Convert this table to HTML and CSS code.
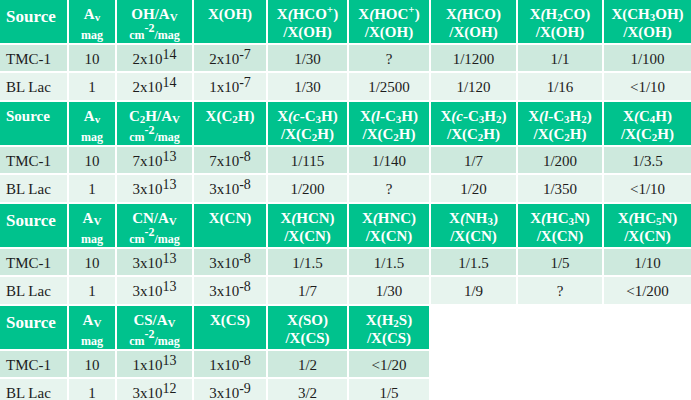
FILE: index.html
```html
<!DOCTYPE html>
<html lang="en">
  <head>
    <meta charset="UTF-8" />
    <title>Molekyler</title>
    <link rel="stylesheet" href="styles.css">
  </head>
  <body>
    <table class="tabel">
      <colgroup>
        <col class="c1" /><col class="c2" /><col class="c3" /><col class="c4" /><col class="c5" />
        <col class="c6" /><col class="c7" /><col class="c8" /><col class="c9" />
      </colgroup>
      <tr class="hoved">
        <th class="kilde">Source</th>
        <th>A<sub>v</sub><br /><span class="lille">mag</span></th>
        <th>OH/A<sub>V</sub><br /><span class="lille">cm<sup>-2</sup>/mag</span></th>
        <th>X(OH)</th>
        <th>X<i>(</i>HCO<sup>+</sup>)<br />/X(OH)</th>
        <th>X<i>(</i>HOC<sup>+</sup>)<br />/X(OH)</th>
        <th>X<i>(</i>HCO)<br />/X(OH)</th>
        <th>X<i>(</i>H<sub>2</sub>CO)<br />/X(OH)</th>
        <th>X(CH<sub>3</sub>OH)<br />/X(OH)</th>
      </tr>
      <tr class="lys">
        <td class="kilde">TMC-1</td><td>10</td><td>2x10<sup>14</sup></td><td>2x10<sup>-7</sup></td>
        <td>1/30</td><td>?</td><td>1/1200</td><td>1/1</td><td>1/100</td>
      </tr>
      <tr class="lysere">
        <td class="kilde">BL Lac</td><td>1</td><td>2x10<sup>14</sup></td><td>1x10<sup>-7</sup></td>
        <td>1/30</td><td>1/2500</td><td>1/120</td><td>1/16</td><td>&lt;1/10</td>
      </tr>
    </table>

    <table class="tabel">
      <colgroup>
        <col class="c1" /><col class="c2" /><col class="c3" /><col class="c4" /><col class="c5" />
        <col class="c6" /><col class="c7" /><col class="c8" /><col class="c9" />
      </colgroup>
      <tr class="hoved">
        <th class="kilde mindre">Source</th>
        <th>A<sub>v</sub><br /><span class="lille">mag</span></th>
        <th>C<sub>2</sub>H/A<sub>V</sub><br /><span class="lille">cm<sup>-2</sup>/mag</span></th>
        <th>X(C<sub>2</sub>H)</th>
        <th>X<i>(c</i>-C<sub>3</sub>H)<br />/X(C<sub>2</sub>H)</th>
        <th>X<i>(l</i>-C<sub>3</sub>H)<br />/X(C<sub>2</sub>H)</th>
        <th>X<i>(c</i>-C<sub>3</sub>H<sub>2</sub>)<br />/X(C<sub>2</sub>H)</th>
        <th>X<i>(l</i>-C<sub>3</sub>H<sub>2</sub>)<br />/X(C<sub>2</sub>H)</th>
        <th>X<i>(</i>C<sub>4</sub>H)<br />/X(C<sub>2</sub>H)</th>
      </tr>
      <tr class="lys">
        <td class="kilde">TMC-1</td><td>10</td><td>7x10<sup>13</sup></td><td>7x10<sup>-8</sup></td>
        <td>1/115</td><td>1/140</td><td>1/7</td><td>1/200</td><td>1/3.5</td>
      </tr>
      <tr class="lysere">
        <td class="kilde">BL Lac</td><td>1</td><td>3x10<sup>13</sup></td><td>3x10<sup>-8</sup></td>
        <td>1/200</td><td>?</td><td>1/20</td><td>1/350</td><td>&lt;1/10</td>
      </tr>
    </table>

    <table class="tabel">
      <colgroup>
        <col class="c1" /><col class="c2" /><col class="c3" /><col class="c4" /><col class="c5" />
        <col class="c6" /><col class="c7" /><col class="c8" /><col class="c9" />
      </colgroup>
      <tr class="hoved">
        <th class="kilde">Source</th>
        <th>A<sub>V</sub><br /><span class="lille">mag</span></th>
        <th>CN/A<sub>V</sub><br /><span class="lille">cm<sup>-2</sup>/mag</span></th>
        <th>X(CN)</th>
        <th>X<i>(</i>HCN)<br />/X(CN)</th>
        <th>X<i>(</i>HNC)<br />/X(CN)</th>
        <th>X<i>(</i>NH<sub>3</sub>)<br />/X(CN)</th>
        <th>X<i>(</i>HC<sub>3</sub>N)<br />/X(CN)</th>
        <th>X<i>(</i>HC<sub>5</sub>N)<br />/X(CN)</th>
      </tr>
      <tr class="lys">
        <td class="kilde">TMC-1</td><td>10</td><td>3x10<sup>13</sup></td><td>3x10<sup>-8</sup></td>
        <td>1/1.5</td><td>1/1.5</td><td>1/1.5</td><td>1/5</td><td>1/10</td>
      </tr>
      <tr class="lysere">
        <td class="kilde">BL Lac</td><td>1</td><td>3x10<sup>13</sup></td><td>3x10<sup>-8</sup></td>
        <td>1/7</td><td>1/30</td><td>1/9</td><td>?</td><td>&lt;1/200</td>
      </tr>
    </table>

    <table class="tabel kort">
      <colgroup>
        <col class="c1" /><col class="c2" /><col class="c3" /><col class="c4" /><col class="c5" />
        <col class="c6" />
      </colgroup>
      <tr class="hoved">
        <th class="kilde">Source</th>
        <th>A<sub>V</sub><br /><span class="lille">mag</span></th>
        <th>CS/A<sub>V</sub><br /><span class="lille">cm<sup>-2</sup>/mag</span></th>
        <th>X(CS)</th>
        <th>X<i>(</i>SO)<br />/X(CS)</th>
        <th>X(H<sub>2</sub>S)<br />/X(CS)</th>
      </tr>
      <tr class="lys">
        <td class="kilde">TMC-1</td><td>10</td><td>1x10<sup>13</sup></td><td>1x10<sup>-8</sup></td>
        <td>1/2</td><td>&lt;1/20</td>
      </tr>
      <tr class="lysere">
        <td class="kilde">BL Lac</td><td>1</td><td>3x10<sup>12</sup></td><td>3x10<sup>-9</sup></td>
        <td>3/2</td><td>1/5</td>
      </tr>
    </table>
  </body>
</html>
```

FILE: styles.css
```css
body {
  margin: 0;
  background-color: #ffffff;
  font-family: "Liberation Serif", "Times New Roman", serif;
}

.tabel {
  border-collapse: separate;
  border-spacing: 0;
  table-layout: fixed;
  width: 691px;
}

.tabel.kort {
  width: 431px;
}

.c1 { width: 69px; }
.c2 { width: 48px; }
.c3 { width: 77px; }
.c4 { width: 74px; }
.c5 { width: 81px; }
.c6 { width: 82px; }
.c7 { width: 87px; }
.c8 { width: 86px; }
.c9 { width: 87px; }

th,
td {
  padding: 0;
  text-align: center;
  border-right: 2px solid #ffffff;
  border-bottom: 2px solid #ffffff;
  white-space: nowrap;
}

th:last-child,
td:last-child {
  border-right: none;
}

.kort th:last-child,
.kort td:last-child {
  border-right: 2px solid #ffffff;
}

.hoved th {
  height: 45px;
  background-color: #00c28d;
  color: #ffffff;
  font-size: 15px;
  font-weight: bold;
  line-height: 18px;
  vertical-align: top;
  padding-top: 5px;
  box-sizing: border-box;
}

.hoved th.kilde {
  font-size: 17px;
  line-height: 20px;
  padding-top: 7px;
}

.hoved th.mindre {
  font-size: 15px;
  padding-top: 4px;
}

.lys td,
.lysere td {
  font-size: 15px;
  color: #1c1c1c;
  vertical-align: middle;
  padding-top: 2px;
}

.lys td {
  height: 24px;
  background-color: #cde9dd;
}

.lysere td {
  height: 25px;
  background-color: #e7f4ee;
}

td.kilde,
th.kilde {
  text-align: left;
  padding-left: 6px;
}

.lille {
  font-size: 12px;
  position: relative;
  top: 2px;
}

.lille sup {
  font-size: 12px;
  position: relative;
  top: -7px;
  vertical-align: baseline;
}

sub {
  font-size: 11px;
  vertical-align: -2px;
  line-height: 0;
}

sup {
  font-size: 11px;
  vertical-align: 6px;
  line-height: 0;
}

td sup {
  font-size: 14px;
  vertical-align: 5px;
}
```
